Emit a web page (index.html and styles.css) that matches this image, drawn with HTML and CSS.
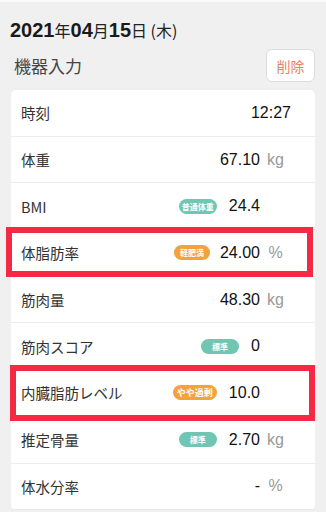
FILE: index.html
```html
<!DOCTYPE html>
<html lang="ja">
<head>
    <meta charset="UTF-8">
    <meta name="viewport" content="width=device-width, initial-scale=1.0">
    <title>測定記録</title>
    <link rel="stylesheet" href="styles.css">
</head>
<body>
    <div class="head">
        <div class="date">
            <b>2021</b><span>年</span><b>04</b><span>月</span><b>15</b><span>日 (木)</span>
        </div>
        <div class="source">
            <p>機器入力</p>
            <button class="del">削除</button>
        </div>
    </div>

    <div class="card">
        <div class="row">
            <span class="label">時刻</span>
            <span class="value">12:27</span>
        </div>
        <div class="row">
            <span class="label">体重</span>
            <span class="value">67.10</span>
            <span class="unit">kg</span>
        </div>
        <div class="row">
            <span class="label">BMI</span>
            <span class="badge ok">普通体重</span>
            <span class="value">24.4</span>
            <span class="unit"></span>
        </div>
        <div class="row mark first">
            <span class="label">体脂肪率</span>
            <span class="badge warn short">軽肥満</span>
            <span class="value">24.00</span>
            <span class="unit">%</span>
        </div>
        <div class="row">
            <span class="label">筋肉量</span>
            <span class="value">48.30</span>
            <span class="unit">kg</span>
        </div>
        <div class="row">
            <span class="label">筋肉スコア</span>
            <span class="badge ok">標準</span>
            <span class="value">0</span>
            <span class="unit"></span>
        </div>
        <div class="row mark second">
            <span class="label">内臓脂肪レベル</span>
            <span class="badge warn wide">やや過剰</span>
            <span class="value">10.0</span>
            <span class="unit"></span>
        </div>
        <div class="row">
            <span class="label">推定骨量</span>
            <span class="badge ok">標準</span>
            <span class="value">2.70</span>
            <span class="unit">kg</span>
        </div>
        <div class="row">
            <span class="label">体水分率</span>
            <span class="value">-</span>
            <span class="unit">%</span>
        </div>
    </div>
</body>
</html>
```

FILE: styles.css
```css
*,
*:after,
*:before
{
    margin: 0;
    padding: 0;
    box-sizing: border-box;
}
body
{
    background: #f0f0f0;
    font-family: "Liberation Sans", "Noto Sans CJK JP", sans-serif;
    color: #222;
    border-top: 2px solid #fafafa;
}

.head
{
    padding: 16px 11px 0 10px;
}
.date
{
    font-size: 16px;
    line-height: 24px;
    color: #222;
}
.date b
{
    font-size: 20px;
    font-weight: bold;
    color: #1a1a1a;
}
.date span
{
    font-family: "Noto Sans CJK JP", sans-serif;
}

.source
{
    margin-top: 5px;
    display: flex;
    align-items: center;
    justify-content: space-between;
    padding-left: 4px;
}
.source p
{
    font-family: "Noto Sans CJK JP", sans-serif;
    font-size: 17px;
    color: #444;
}
.del
{
    width: 49px;
    height: 33px;
    background: #fff;
    border: 1px solid #dcdcdc;
    border-radius: 6px;
    font-family: "Noto Sans CJK JP", sans-serif;
    font-size: 14px;
    color: #e8836b;
}

.card
{
    margin: 8px 11px 0 11px;
    background: #fff;
    border-radius: 5px;
}
.row
{
    position: relative;
    height: 46.7px;
    display: flex;
    align-items: center;
    padding: 0 24px 0 10px;
    border-bottom: 1px solid #ececec;
}
.label
{
    flex: 1;
    font-family: "Noto Sans CJK JP", sans-serif;
    font-size: 14.5px;
    color: #333;
}
.value
{
    font-size: 16px;
    color: #111;
}
.unit
{
    width: 31px;
    text-align: center;
    font-size: 16px;
    color: #999;
}

.badge
{
    min-width: 38px;
    height: 15px;
    margin-right: 12px;
    padding: 0 3px;
    border-radius: 8px;
    display: flex;
    align-items: center;
    justify-content: center;
    font-family: "Noto Sans CJK JP", sans-serif;
    font-size: 8px;
    font-weight: bold;
    color: #fff;
}
.ok
{
    background: #70c6b3;
}
.warn
{
    background: #f4a23c;
}
.badge.short
{
    min-width: 36px;
    margin-right: 10px;
}
.badge.wide
{
    font-size: 9px;
    padding: 0 4px;
}

.mark::after
{
    content: "";
    position: absolute;
    border: 6px solid #f42a45;
}
.first::after
{
    top: -3px;
    bottom: -1px;
    left: -5px;
    right: 2px;
}
.second::after
{
    top: -5px;
    bottom: -5px;
    left: -1px;
    right: 0;
}
```
